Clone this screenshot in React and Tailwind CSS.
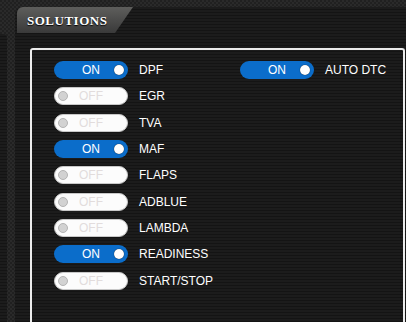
import React from 'react';

const leftItems = [
    { label: 'DPF', on: true },
    { label: 'EGR', on: false },
    { label: 'TVA', on: false },
    { label: 'MAF', on: true },
    { label: 'FLAPS', on: false },
    { label: 'ADBLUE', on: false },
    { label: 'LAMBDA', on: false },
    { label: 'READINESS', on: true },
    { label: 'START/STOP', on: false },
];

const checker = 'bg-[repeating-conic-gradient(#2a2a2a_0_25%,#202020_0_50%)] bg-[length:4px_4px]';
const stripes = 'bg-[repeating-linear-gradient(to_bottom,#1c1c1c_0,#1c1c1c_2px,#141414_2px,#141414_3px)]';

const Toggle = ({ on }) => {
    if (on) {
        return (
            <div className="grid h-[18px] w-[74px] shrink-0 grid-cols-[14px_1fr_14px] items-center rounded-full bg-[#0b6dca]">
                <span />
                <span className="text-center text-[12px] leading-none text-white">ON</span>
                <span className="h-[10px] w-[10px] rounded-full bg-white shadow-[0_0_1px_#000]" />
            </div>
        );
    }
    return (
        <div className="grid h-[18px] w-[74px] shrink-0 grid-cols-[14px_1fr_14px] items-center rounded-full border border-[#c8c8c8] bg-[#fcfcfc]">
            <span className="ml-[3px] h-[10px] w-[10px] rounded-full border border-[#b4b4b4] bg-[#d2d2d2]" />
            <span className="text-center text-[12px] leading-none text-[#e2dcdc]">OFF</span>
            <span />
        </div>
    );
};

const Row = ({ label, on }) => (
    <div className="flex h-[18px] items-center gap-[11px]">
        <Toggle on={on} />
        <span className="text-[12px] leading-none text-white">{label}</span>
    </div>
);

export default function App() {
    return (
        <div className={`flex h-[322px] w-[406px] flex-col overflow-hidden ${checker}`} style={{ fontFamily: '"Liberation Sans", Arial, sans-serif' }}>
            <div className="h-[7px] shrink-0" />
            <div className="flex min-h-0 flex-1">
                {/* left rail */}
                <div className="flex w-[15px] shrink-0 flex-col">
                    <div className="h-[27px] shrink-0" />
                    <div className={`w-[7px] flex-1 rounded-tr-[4px] ${stripes}`} />
                </div>

                <div className={`flex min-w-0 flex-1 flex-col rounded-tl-[8px] ${stripes}`}>
                    {/* header tab */}
                    <div className="ml-[2px] h-[26px] w-[116px] shrink-0 rounded-tl-[6px] bg-gradient-to-b from-[#5e5e5c] to-[#3a3a3a] [clip-path:polygon(0_0,100%_0,calc(100%-18px)_100%,0_100%)]">
                        <div
                            className="pl-[10px] pt-[7px] text-[13px] font-bold leading-none tracking-[0.5px] text-white [text-shadow:0_1px_1px_#000]"
                            style={{ fontFamily: '"Liberation Serif", "Times New Roman", serif' }}
                        >
                            SOLUTIONS
                        </div>
                    </div>

                    {/* panel */}
                    <div className="ml-[15px] mr-[1px] mt-[15px] flex flex-1 rounded-t-[3px] border-2 border-b-0 border-[#ececec] pl-[22px] pt-[11px]">
                        <div className="flex w-[186px] shrink-0 flex-col gap-[8.33px]">
                            {leftItems.map((item) => (
                                <Row key={item.label} label={item.label} on={item.on} />
                            ))}
                        </div>
                        <div className="flex flex-col">
                            <Row label="AUTO DTC" on />
                        </div>
                    </div>
                </div>
            </div>
        </div>
    );
}
